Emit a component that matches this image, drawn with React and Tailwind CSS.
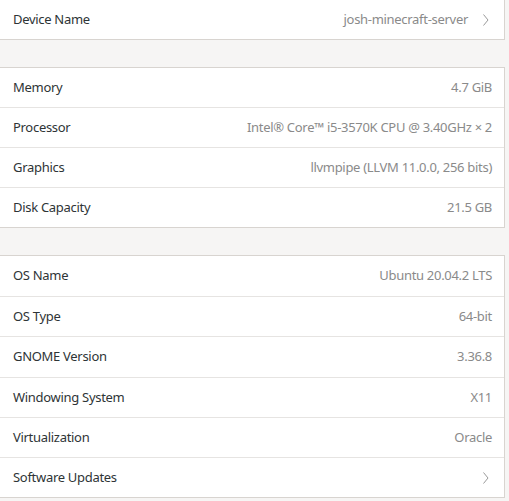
import React from "react";

const Chevron = () => (
  <svg width="8" height="14" viewBox="0 0 8 14" className="ml-[14px] mr-[2px]">
    <polyline points="1.5,1.5 6,7 1.5,12.5" fill="none" stroke="#9a9a9a" strokeWidth="1" />
  </svg>
);

const Row = ({ label, value, chevron, last, tall }) => (
  <div
    className={
      "flex items-center justify-between pl-[13px] pr-[12px] " +
      (last ? "h-[39px]" : (tall ? "h-[41px]" : "h-[40px]") + " border-b border-[#e6e4e2]")
    }
  >
    <span className="text-[#2e3436]">{label}</span>
    <span className="flex items-center text-[#8a8a8a]">
      {value && <span>{value}</span>}
      {chevron && <Chevron />}
    </span>
  </div>
);

const Panel = ({ rows, first }) => (
  <div className={"bg-white border-r border-[#d8d4d0] " + (first ? "border-b" : "border-y")}>
    {rows.map((r, i) => (
      <Row key={i} {...r} last={i === rows.length - 1} />
    ))}
  </div>
);

export default function App() {
  return (
    <div
      className="w-[509px] h-[501px] overflow-hidden bg-[#f6f5f4] pr-[4px] text-[13px] tracking-[-0.3px]"
      style={{ fontFamily: '"Noto Sans", "Open Sans", sans-serif' }}
    >
      <div className="flex flex-col gap-[27px]">
        <Panel
          first
          rows={[{ label: "Device Name", value: "josh-minecraft-server", chevron: true }]}
        />
        <Panel
          rows={[
            { label: "Memory", value: "4.7 GiB" },
            { label: "Processor", value: "Intel® Core™ i5-3570K CPU @ 3.40GHz × 2" },
            { label: "Graphics", value: "llvmpipe (LLVM 11.0.0, 256 bits)" },
            { label: "Disk Capacity", value: "21.5 GB" },
          ]}
        />
        <Panel
          rows={[
            { label: "OS Name", value: "Ubuntu 20.04.2 LTS", tall: true },
            { label: "OS Type", value: "64-bit" },
            { label: "GNOME Version", value: "3.36.8", tall: true },
            { label: "Windowing System", value: "X11" },
            { label: "Virtualization", value: "Oracle" },
            { label: "Software Updates", chevron: true },
          ]}
        />
      </div>
    </div>
  );
}
